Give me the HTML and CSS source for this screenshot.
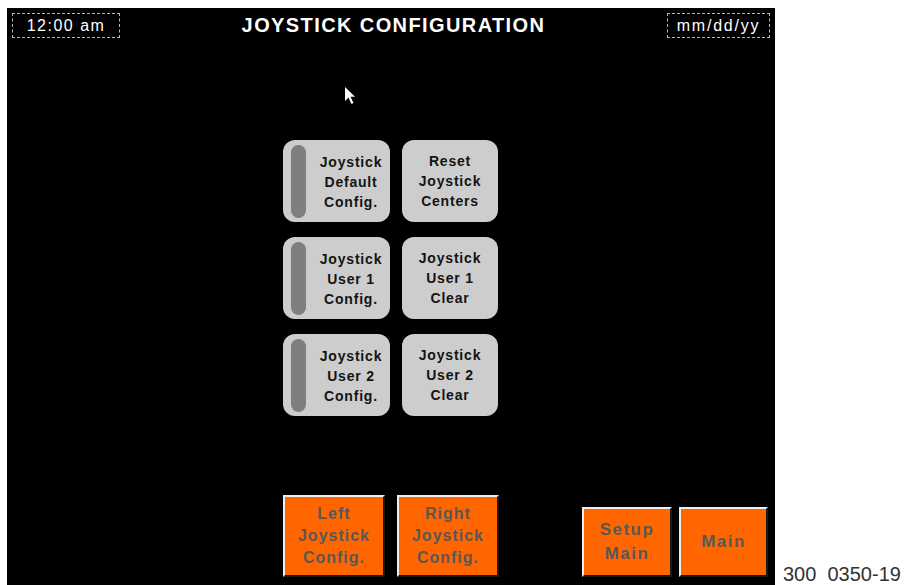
FILE: index.html
```html
<!DOCTYPE html>
<html lang="en">
<head>
    <meta charset="UTF-8">
    <title>Joystick Configuration</title>
    <link rel="stylesheet" href="styles.css">
</head>
<body>

<div class="screen">
    <div class="top-bar">
        <div class="field time">12:00 am</div>
        <div class="title">JOYSTICK CONFIGURATION</div>
        <div class="field date">mm/dd/yy</div>
    </div>

    <div class="key-grid">
        <div class="key with-bar"><span class="bar"></span><span class="label">Joystick<br>Default<br>Config.</span></div>
        <div class="key"><span class="label">Reset<br>Joystick<br>Centers</span></div>
        <div class="key with-bar"><span class="bar"></span><span class="label">Joystick<br>User 1<br>Config.</span></div>
        <div class="key"><span class="label">Joystick<br>User 1<br>Clear</span></div>
        <div class="key with-bar"><span class="bar"></span><span class="label">Joystick<br>User 2<br>Config.</span></div>
        <div class="key"><span class="label">Joystick<br>User 2<br>Clear</span></div>
    </div>

    <div class="bottom-bar">
        <div class="nav-group">
            <div class="nav-btn tall">Left<br>Joystick<br>Config.</div>
            <div class="nav-btn tall">Right<br>Joystick<br>Config.</div>
        </div>
        <div class="nav-group right">
            <div class="nav-btn short wide">Setup<br>Main</div>
            <div class="nav-btn short">Main</div>
        </div>
    </div>

    <svg class="pointer" width="12" height="18" viewBox="0 0 12 18">
        <path d="M0 0 L0 14 L3.5 10.5 L6.5 17 L8.5 16 L5.5 9.8 L10 9.8 Z" fill="#ffffff"/>
    </svg>
</div>

<div class="fig-no">300  0350-19</div>

</body>
</html>
```

FILE: styles.css
```css
:root {
    --panel: #000000;
    --key-grey: #cdcdcd;
    --key-bar: #7f7f7f;
    --orange: #ff6600;
}

body {
    margin: 0;
    height: 585px;
    overflow: hidden;
    background: #ffffff;
    display: flex;
    align-items: flex-end;
    font-family: "Liberation Sans", Arial, sans-serif;
}

.screen {
    position: relative;
    margin-left: 7px;
    width: 768px;
    height: 577px;
    background: var(--panel);
    display: flex;
    flex-direction: column;
}

.top-bar {
    display: flex;
    align-items: center;
    justify-content: space-between;
    padding: 5px 5px 0 5px;
}

.field {
    height: 23px;
    border: 1px dashed #b8b8b8;
    color: #ffffff;
    font-size: 16px;
    line-height: 23px;
    letter-spacing: 1.5px;
    text-align: center;
}

.time {
    width: 106px;
}

.date {
    width: 101px;
    letter-spacing: 1.8px;
}

.title {
    color: #ffffff;
    font-size: 20px;
    font-weight: bold;
    letter-spacing: 1.4px;
}

.key-grid {
    display: grid;
    grid-template-columns: 107px 96px;
    grid-auto-rows: 82px;
    column-gap: 12px;
    row-gap: 15px;
    margin: 102px 0 0 276px;
}

.key {
    display: flex;
    align-items: center;
    justify-content: center;
    background: var(--key-grey);
    border-radius: 12px;
    color: #141414;
    font-size: 14px;
    font-weight: bold;
    line-height: 20px;
    letter-spacing: 0.8px;
    text-align: center;
}

.key.with-bar {
    justify-content: flex-start;
    padding: 5px 0 4px 8px;
}

.bar {
    width: 15px;
    height: 100%;
    background: var(--key-bar);
    border-radius: 8px;
}

.with-bar .label {
    flex: 1;
    padding-left: 6px;
}

.bottom-bar {
    margin-top: auto;
    display: flex;
    align-items: flex-end;
    justify-content: space-between;
    padding: 0 7px 8px 276px;
}

.nav-group {
    display: flex;
    align-items: flex-end;
    gap: 12px;
}

.nav-group.right {
    gap: 7px;
}

.nav-btn {
    box-sizing: border-box;
    display: flex;
    align-items: center;
    justify-content: center;
    background: var(--orange);
    border-top: 2px solid #eeeeee;
    border-left: 2px solid #eeeeee;
    border-right: 2px solid #1a1a1a;
    border-bottom: 2px solid #1a1a1a;
    color: #585858;
    font-size: 16px;
    font-weight: bold;
    line-height: 22px;
    letter-spacing: 1px;
    text-align: center;
}

.nav-btn.tall {
    width: 102px;
    height: 82px;
}

.nav-btn.short {
    width: 89px;
    height: 70px;
    font-size: 17px;
    line-height: 24px;
    letter-spacing: 1.5px;
}

.nav-btn.wide {
    width: 90px;
}

.pointer {
    position: absolute;
    left: 338px;
    top: 79px;
}

.fig-no {
    margin-left: 8px;
    color: #333333;
    font-size: 20px;
    line-height: 22px;
    white-space: pre;
}
```
